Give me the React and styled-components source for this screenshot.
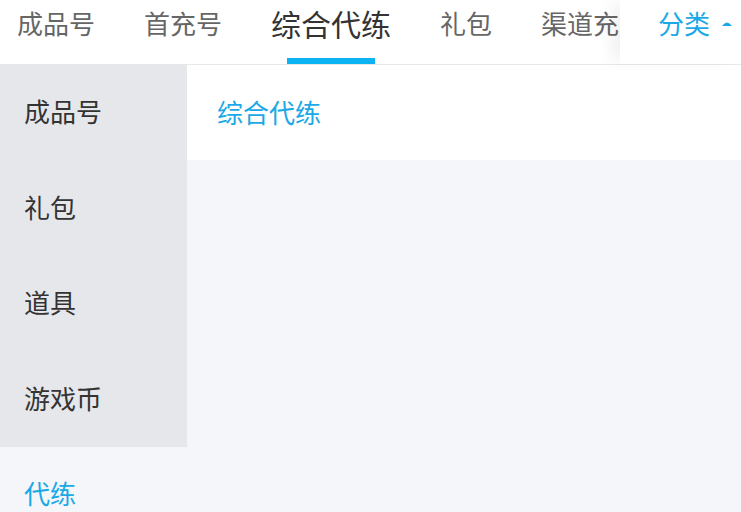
import React from "react";
import styled, { createGlobalStyle } from "styled-components";

const Global = createGlobalStyle`
  html, body { margin: 0; padding: 0; background: #f5f6fa; }
  body { font-family: "Noto Sans CJK SC", "Noto Sans", sans-serif; }
  * { box-sizing: border-box; }
`;

const Page = styled.div`
  width: 741px;
  height: 512px;
  overflow: hidden;
  display: flex;
  flex-direction: column;
  background: #f5f6fa;
`;

const Header = styled.div`
  display: flex;
  height: 65px;
  background: #fff;
  border-bottom: 1px solid #e8e8ea;
  flex-shrink: 0;
`;

const TabList = styled.div`
  flex: 1;
  display: flex;
  gap: 49px;
  padding-left: 17px;
  overflow: hidden;
  white-space: nowrap;
`;

const Tab = styled.div`
  position: relative;
  height: 64px;
  line-height: 46px;
  font-size: ${(p) => (p.$active ? "30px" : "26px")};
  color: ${(p) => (p.$active ? "#333" : "#666")};
  flex-shrink: 0;
`;

const Underline = styled.span`
  position: absolute;
  left: 50%;
  bottom: 0;
  width: 88px;
  height: 6px;
  margin-left: -44px;
  background: #0cb3f3;
`;

const CategoryBtn = styled.div`
  width: 121px;
  flex-shrink: 0;
  display: flex;
  align-items: flex-start;
  padding-left: 38px;
  gap: 11px;
  height: 64px;
  line-height: 46px;
  font-size: 26px;
  color: #1aa9e6;
  background: #fff;
  box-shadow: -12px 0 14px -4px rgba(0, 0, 0, 0.06);
  position: relative;
  z-index: 1;
`;

const Caret = styled.svg`
  margin-top: 19px;
  width: 12px;
  height: 8px;
`;

const Body = styled.div`
  flex: 1;
  display: flex;
`;

const Sidebar = styled.div`
  width: 187px;
  flex-shrink: 0;
  display: flex;
  flex-direction: column;
`;

const SideItem = styled.div`
  height: 95.5px;
  flex-shrink: 0;
  display: flex;
  align-items: center;
  padding-left: 24px;
  padding-bottom: 4px;
  font-size: 26px;
  color: ${(p) => (p.$active ? "#1aa9e6" : "#333")};
  background: ${(p) => (p.$active ? "#f5f6fa" : "#e6e7eb")};
`;

const Content = styled.div`
  flex: 1;
  display: flex;
  flex-direction: column;
`;

const SubPanel = styled.div`
  height: 95px;
  background: #fff;
  display: flex;
  align-items: center;
  padding-left: 30px;
  padding-bottom: 3px;
  font-size: 26px;
  color: #1aa9e6;
`;

const tabs = ["成品号", "首充号", "综合代练", "礼包", "渠道充"];
const side = ["成品号", "礼包", "道具", "游戏币", "代练"];

export default function App() {
  return (
    <Page>
      <Global />
      <Header>
        <TabList>
          {tabs.map((t, i) => (
            <Tab key={t} $active={i === 2}>
              {t}
              {i === 2 && <Underline />}
            </Tab>
          ))}
        </TabList>
        <CategoryBtn>
          分类
          <Caret viewBox="0 0 12 8">
            <path d="M1 7 Q6 0 11 7 Z" fill="#1aa9e6" />
          </Caret>
        </CategoryBtn>
      </Header>
      <Body>
        <Sidebar>
          {side.map((s, i) => (
            <SideItem key={s} $active={i === 4}>
              {s}
            </SideItem>
          ))}
        </Sidebar>
        <Content>
          <SubPanel>综合代练</SubPanel>
        </Content>
      </Body>
    </Page>
  );
}
